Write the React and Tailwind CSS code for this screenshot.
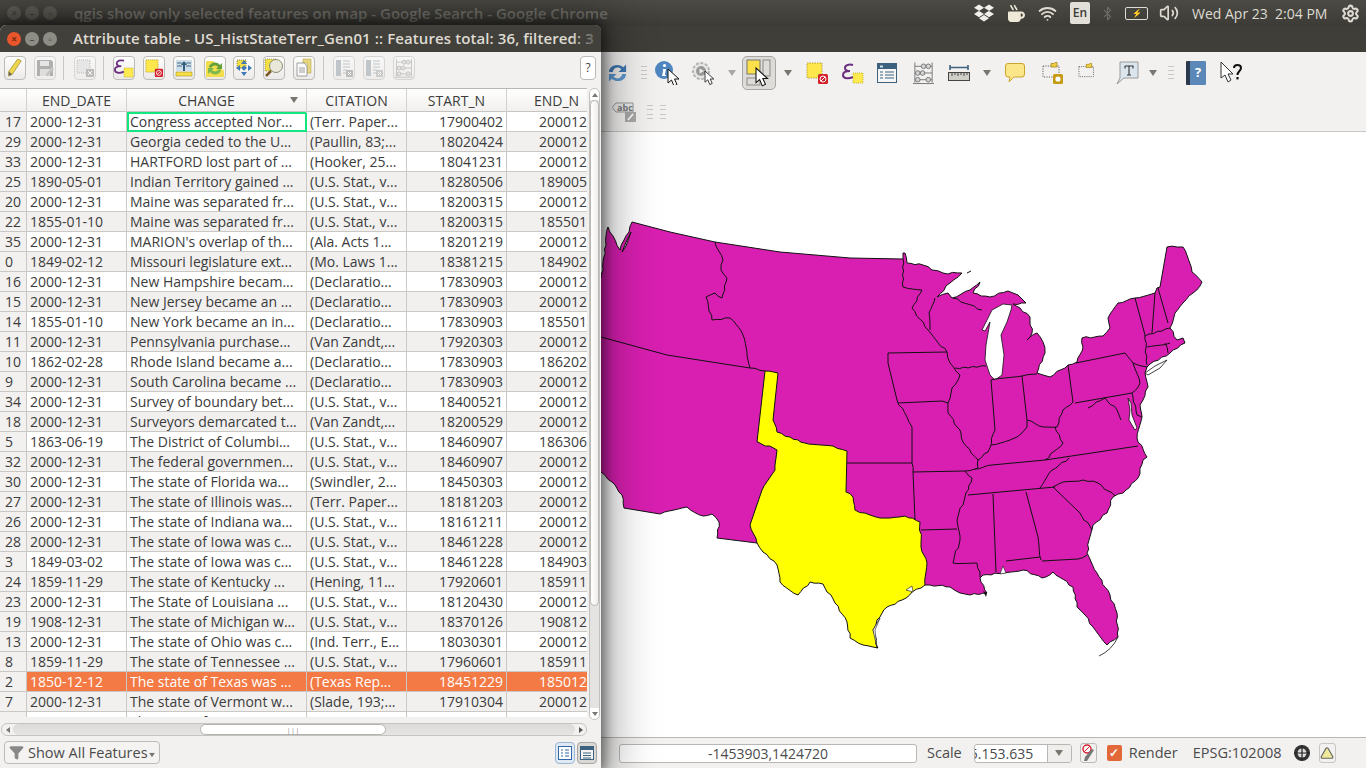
import { Wifi, Bluetooth, Volume2, Settings, Triangle, Funnel } from "lucide-react";
import { FaDropbox, FaMugHot } from "react-icons/fa";

const rows = [
  [17, "2000-12-31", "Congress accepted Nor...", "(Terr. Paper...", "17900402", "20001231"],
  [29, "2000-12-31", "Georgia ceded to the U...", "(Paullin, 83;...", "18020424", "20001231"],
  [33, "2000-12-31", "HARTFORD lost part of ...", "(Hooker, 25...", "18041231", "20001231"],
  [25, "1890-05-01", "Indian Territory gained ...", "(U.S. Stat., v...", "18280506", "18900501"],
  [20, "2000-12-31", "Maine was separated fr...", "(U.S. Stat., v...", "18200315", "20001231"],
  [22, "1855-01-10", "Maine was separated fr...", "(U.S. Stat., v...", "18200315", "18550110"],
  [35, "2000-12-31", "MARION's overlap of th...", "(Ala. Acts 1...", "18201219", "20001231"],
  [0, "1849-02-12", "Missouri legislature ext...", "(Mo. Laws 1...", "18381215", "18490212"],
  [16, "2000-12-31", "New Hampshire becam...", "(Declaratio...", "17830903", "20001231"],
  [15, "2000-12-31", "New Jersey became an ...", "(Declaratio...", "17830903", "20001231"],
  [14, "1855-01-10", "New York became an in...", "(Declaratio...", "17830903", "18550110"],
  [11, "2000-12-31", "Pennsylvania purchase...", "(Van Zandt,...", "17920303", "20001231"],
  [10, "1862-02-28", "Rhode Island became a...", "(Declaratio...", "17830903", "18620228"],
  [9, "2000-12-31", "South Carolina became ...", "(Declaratio...", "17830903", "20001231"],
  [34, "2000-12-31", "Survey of boundary bet...", "(U.S. Stat., v...", "18400521", "20001231"],
  [18, "2000-12-31", "Surveyors demarcated t...", "(Van Zandt,...", "18200529", "20001231"],
  [5, "1863-06-19", "The District of Columbi...", "(U.S. Stat., v...", "18460907", "18630619"],
  [32, "2000-12-31", "The federal governmen...", "(U.S. Stat., v...", "18460907", "20001231"],
  [30, "2000-12-31", "The state of Florida wa...", "(Swindler, 2...", "18450303", "20001231"],
  [27, "2000-12-31", "The state of Illinois was...", "(Terr. Paper...", "18181203", "20001231"],
  [26, "2000-12-31", "The state of Indiana wa...", "(U.S. Stat., v...", "18161211", "20001231"],
  [28, "2000-12-31", "The state of Iowa was c...", "(U.S. Stat., v...", "18461228", "20001231"],
  [3, "1849-03-02", "The state of Iowa was c...", "(U.S. Stat., v...", "18461228", "18490302"],
  [24, "1859-11-29", "The state of Kentucky ...", "(Hening, 11...", "17920601", "18591129"],
  [23, "2000-12-31", "The State of Louisiana ...", "(U.S. Stat., v...", "18120430", "20001231"],
  [19, "1908-12-31", "The state of Michigan w...", "(U.S. Stat., v...", "18370126", "19081231"],
  [13, "2000-12-31", "The state of Ohio was c...", "(Ind. Terr., E...", "18030301", "20001231"],
  [8, "1859-11-29", "The state of Tennessee ...", "(U.S. Stat., v...", "17960601", "18591129"],
  [2, "1850-12-12", "The state of Texas was ...", "(Texas Rep...", "18451229", "18501212"],
  [7, "2000-12-31", "The state of Vermont w...", "(Slade, 193;...", "17910304", "20001231"],
  [6, "2000-12-31", "The state of Virginia w...", "(U.S. Stat., v...", "17880625", "20001231"],
];

const purple =
  "M590,278 L601,278 L603,262 L606,245 L608,227 L613,236 L620,250 L624,240 L629,232 L632,222 L670,232 L715,242 L780,252 L850,258 L903,259 L903,253 L905,253 L907,263 L923,265 L932,270 L943,273 L962,273 L950,283 L937,297 L948,293 L952,298 L970,290 L980,282 L973,293 L990,297 L1008,291 L1018,295 L1026,303 L1013,304 L1020,308 L1030,317 L1032,333 L1027,340 L1030,337 L1037,333 L1043,342 L1045,353 L1037,373 L1043,375 L1050,377 L1068,365 L1077,362 L1083,347 L1082,338 L1103,336 L1110,328 L1108,318 L1118,303 L1135,298 L1155,293 L1157,288 L1160,287 L1167,247 L1177,247 L1183,247 L1192,272 L1202,282 L1193,293 L1183,303 L1175,313 L1170,328 L1177,340 L1183,338 L1185,343 L1170,353 L1150,364 L1147,367 L1145,373 L1148,387 L1143,400 L1140,405 L1142,417 L1137,438 L1147,457 L1143,460 L1138,478 L1123,493 L1113,497 L1107,513 L1093,525 L1087,553 L1097,573 L1110,595 L1117,613 L1118,637 L1107,645 L1093,627 L1085,615 L1077,607 L1073,587 L1053,572 L1042,578 L1023,570 L1003,573 L983,575 L980,578 L987,593 L970,595 L960,593 L950,587 L930,585 L925,585 L757,543 L717,538 L719,522 L712,514 L703,516 L687,507 L682,508 L660,514 L624,508 L622,495 L612,482 L601,472 L590,472 Z";

const texas =
  "M765,371 L778,373 L773,420 L777,432 L790,437 L805,443 L833,446 L847,451 L846,492 L853,497 L855,510 L870,515 L880,518 L890,518 L905,516 L920,522 L921,547 L927,563 L925,585 L912,592 L902,600 L887,607 L877,620 L873,630 L878,648 L863,645 L850,638 L847,622 L835,603 L823,584 L810,582 L798,595 L780,582 L777,565 L763,552 L757,543 L750,525 L762,490 L775,470 L777,450 L758,442 L757,442 Z";

const borders = [
  "M601,337 L667,355 L750,368 L765,371",
  "M715,242 L723,260 L721,270 L727,278 L722,298 L715,293 L706,297 L712,320 L730,318 L743,335 L747,352 L750,368",
  "M903,259 L903,287 L922,290 L912,308 L928,330 L947,352",
  "M888,353 L947,352",
  "M888,353 L888,363 L897,400 L907,417 L912,427 L912,463 L847,463",
  "M898,403 L942,401 L948,403",
  "M912,463 L913,472 L915,520",
  "M913,472 L965,471 L972,478 L965,497 L957,520 L960,540 L953,563 L977,563 L980,577",
  "M921,530 L957,529",
  "M947,352 L950,363 L960,375 L952,388 L948,403 L948,413 L960,430 L963,442 L978,460 L978,468 L975,469 L965,471",
  "M955,368 L986,366",
  "M991,380 L995,430 L988,452 L978,460",
  "M991,380 L1022,376 L1037,374",
  "M1022,376 L1027,420",
  "M991,445 L1010,440 L1017,437 L1027,427 L1027,420 L1043,427 L1057,427 L1063,410 L1073,402 L1068,365",
  "M975,469 L992,465 L1045,460 L1138,446",
  "M968,495 L1055,487",
  "M993,494 L996,572",
  "M1026,492 L1038,537 L1041,560",
  "M1006,561 L1040,557",
  "M1042,561 L1078,559 L1087,555",
  "M1053,487 L1080,513 L1092,530",
  "M1053,487 L1063,482 L1083,480 L1098,483 L1115,496",
  "M1040,488 L1052,470 L1069,458",
  "M1045,460 L1063,443 L1055,427",
  "M1076,363 L1125,353 L1133,363 L1140,383 L1132,393 L1075,403",
  "M1133,363 L1147,367",
  "M1088,408 L1105,398 L1117,410 L1121,420",
  "M1135,298 L1145,335 L1147,365",
  "M1145,336 L1170,328",
  "M1147,347 L1170,343",
  "M1155,293 L1152,333",
  "M1158,288 L1168,323",
  "M1165,343 L1168,353",
  "M935,298 L929,313 L930,330",
  "M982,310 L953,298",
  "M1132,393 L1137,415 L1142,417",
];

// coasts and rivers in the picture are jagged, so break up the short segments a bit
const roughen = (d) => {
  const pts = d.match(/-?\d+,-?\d+/g).map((p) => p.split(",").map(Number));
  const closed = d.trim().endsWith("Z");
  let out = `M${pts[0][0]},${pts[0][1]}`;
  for (let i = 1; i < pts.length; i++) {
    const [ax, ay] = pts[i - 1];
    const [bx, by] = pts[i];
    const len = Math.hypot(bx - ax, by - ay);
    if (len > 7 && len < 34) {
      const steps = Math.floor(len / 4);
      const seed = Math.abs(ax * 7 + ay * 13 + bx * 17 + by * 23);
      for (let s = 1; s < steps; s++) {
        const t = s / steps;
        const off = ((seed * (s + 3) * 37) % 17) / 8 - 1;
        out += ` L${(ax + (bx - ax) * t - ((by - ay) / len) * off).toFixed(1)},${(ay + (by - ay) * t + ((bx - ax) / len) * off).toFixed(1)}`;
      }
    }
    out += ` L${bx},${by}`;
  }
  return closed ? `${out} Z` : out;
};

const IconBtn = ({ children, className = "", off = false }) => (
  <div className={`flex h-[24px] w-[22px] shrink-0 items-center justify-center rounded-[4px] border border-[#bdbbb7] bg-linear-to-b from-white to-[#eceae8] ${off ? "opacity-50" : ""} ${className}`}>
    {children}
  </div>
);

const Sep = ({ className = "" }) => <div className={`h-[24px] w-px shrink-0 bg-[#c9c7c3] ${className}`} />;

const Grip = ({ className = "" }) => (
  <div className={`flex h-[14px] w-[6px] shrink-0 flex-col justify-between ${className}`}>
    <div className="h-px bg-[#c9c7c3]" />
    <div className="h-px bg-[#c9c7c3]" />
    <div className="h-px bg-[#c9c7c3]" />
    <div className="h-px bg-[#c9c7c3]" />
  </div>
);

const Drop = ({ className = "" }) => (
  <svg viewBox="0 0 8 6" className={`h-[6px] w-[8px] shrink-0 ${className}`}>
    <path d="M0 0H8L4 6Z" fill="#77766f" />
  </svg>
);

const PencilIcon = () => (
  <svg viewBox="0 0 20 22" className="h-[22px] w-[18px]">
    <path d="M13 1L17 3L7 18L3 20L3 15Z" fill="#edd54e" stroke="#a08c2a" strokeWidth=".8" />
    <path d="M3 15L7 18L3 20Z" fill="#6a6a5a" />
  </svg>
);

const SaveIcon = () => (
  <svg viewBox="0 0 20 20" className="h-[20px] w-[20px]">
    <path d="M2 2H16L18 4V18H2Z" fill="#6f6f6f" />
    <rect x="5" y="3" width="9" height="5" fill="#ddd" />
    <rect x="5" y="11" width="10" height="7" fill="#ccc" />
    <path d="M17 9L19 11L13 18H11V16Z" fill="#999" />
  </svg>
);

const DelSel = () => (
  <svg viewBox="0 0 20 20" className="h-[20px] w-[20px]">
    <rect x="2" y="2" width="13" height="13" fill="#ddd" stroke="#888" strokeDasharray="1 1" />
    <rect x="11" y="11" width="8" height="8" fill="#888" />
    <path d="M13 13L17 17M17 13L13 17" stroke="#fff" />
  </svg>
);

const EpsIcon = ({ className = "h-[22px] w-[20px]" }) => (
  <svg viewBox="0 0 22 22" className={className}>
    <path d="M11 3C7 2 3 3 3 6C3 8 5 9 8 9C4 9 1 10 1 13C1 17 7 17 11 15" fill="none" stroke="#6b2f80" strokeWidth="2" />
    <rect x="11" y="11" width="10" height="10" fill="#fdea4e" stroke="#b9a52a" strokeWidth=".8" strokeDasharray="1 1" />
  </svg>
);

const DeselIcon = ({ className = "h-[20px] w-[18px]" }) => (
  <svg viewBox="0 0 22 22" className={className}>
    <rect x="1" y="1" width="15" height="15" fill="#fde74c" stroke="#a8932b" strokeWidth=".8" strokeDasharray="1.5 1" />
    <rect x="12" y="12" width="10" height="10" rx="1.5" fill="#d6212c" />
    <circle cx="17" cy="17" r="3" fill="none" stroke="#fff" />
    <path d="M15 19L19 15" stroke="#fff" />
  </svg>
);

const MoveTopIcon = () => (
  <svg viewBox="0 0 20 20" className="h-[20px] w-[20px]">
    <rect x="2" y="2" width="16" height="11" fill="#cfdfe9" />
    <path d="M3 5H8M3 8H8M12 5H17M12 8H17" stroke="#456c87" />
    <path d="M10 3L13 7H11V13H9V7H7Z" fill="#2f5d7c" />
    <rect x="2" y="14" width="16" height="4" fill="#f7de45" stroke="#a8932b" strokeWidth=".6" />
  </svg>
);

const InvertIcon = () => (
  <svg viewBox="0 0 20 20" className="h-[20px] w-[20px]">
    <path d="M1 3L8 3L19 13V19H1Z" fill="#f2dd4c" />
    <path d="M4 9C5 4 12 3 15 7L17 5V11H11L13 9C11 7 8 7 6 10Z" fill="#63a13d" />
    <path d="M16 12C15 17 8 18 5 14L3 16V10H9L7 12C9 14 12 14 14 11Z" fill="#7cb84e" />
  </svg>
);

const PanSelIcon = () => (
  <svg viewBox="0 0 20 20" className="h-[20px] w-[20px]">
    <path d="M3 2H12V10H3Z" fill="#f4df44" stroke="#333" strokeWidth=".6" strokeDasharray="1 1" />
    <path d="M10 2L13 6H7ZM10 18L7 14H13ZM2 10L6 7V13ZM18 10L14 13V7Z" fill="#3f78b5" />
    <rect x="8" y="8" width="4" height="4" fill="#3f78b5" transform="rotate(45 10 10)" />
  </svg>
);

const ZoomSelIcon = () => (
  <svg viewBox="0 0 20 20" className="h-[20px] w-[20px]">
    <rect x="1" y="1" width="11" height="12" fill="#f4df44" stroke="#555" strokeWidth=".6" strokeDasharray="1 1" />
    <circle cx="12" cy="8" r="6.5" fill="#e9e8d9" stroke="#8a8a72" />
    <path d="M7 13L2 18" stroke="#7c5a26" strokeWidth="2.5" />
  </svg>
);

const CopyIcon = () => (
  <svg viewBox="0 0 20 20" className="h-[20px] w-[20px]">
    <path d="M9 1H17V15H13V5H9Z" fill="#e7d680" stroke="#b9a64e" strokeWidth=".6" />
    <path d="M3 5H10L13 8V18H3Z" fill="#fafafa" stroke="#8a8a8a" strokeWidth=".8" />
    <path d="M5 10H11M5 12H11M5 14H11" stroke="#888" strokeWidth=".8" />
  </svg>
);

const ColsIcon = ({ star = false }) => (
  <svg viewBox="0 0 20 20" className="h-[20px] w-[20px]">
    <rect x="2" y="2" width="5" height="16" fill="#8e9ba4" />
    <path d="M9 3H16M9 6H16M9 9H16M9 12H13M9 15H12" stroke="#8e9ba4" />
    <rect x="12" y="12" width="7" height="7" fill={star ? "#a9a9a9" : "#888"} />
    <path d="M14 14L17 17M17 14L14 17" stroke="#fff" />
  </svg>
);

const AbacusIcon = ({ className = "h-[20px] w-[20px]", color = "#8f8f8f" }) => (
  <svg viewBox="0 0 24 24" className={className}>
    <path d="M3 1V22M21 1V22M1 23H23M3 5H21M3 12H21M3 19H21" stroke={color} fill="none" />
    <circle cx="12" cy="5" r="2.4" fill="#d4d4d4" stroke={color} />
    <circle cx="17" cy="5" r="2.4" fill="#d4d4d4" stroke={color} />
    <circle cx="6" cy="12" r="2.4" fill="#d4d4d4" stroke={color} />
    <circle cx="11" cy="12" r="2.4" fill="#d4d4d4" stroke={color} />
    <circle cx="6" cy="19" r="2.4" fill="#d4d4d4" stroke={color} />
    <circle cx="17" cy="19" r="2.4" fill="#d4d4d4" stroke={color} />
  </svg>
);

const Cursor = ({ x = 0, y = 0, s = 1 }) => (
  <path transform={`translate(${x} ${y}) scale(${s})`} d="M0 0L0 14L3.5 11L6 17L9 15.5L6.5 10L11 10Z" fill="#fff" stroke="#111" strokeWidth="1" />
);

const RefreshIcon = () => (
  <svg viewBox="0 0 22 22" className="h-[22px] w-[21px] shrink-0">
    <path d="M2 10C2 3 12 0 17 5L20 2V10H12L15 7C12 4 7 5 6 10Z" fill="#3f79b4" />
    <path d="M20 12C20 19 10 22 5 17L2 20V12H10L7 15C10 18 15 17 16 12Z" fill="#5d9ad3" />
  </svg>
);

const InfoIcon = () => (
  <svg viewBox="0 0 24 24" className="h-[24px] w-[24px] shrink-0">
    <circle cx="9" cy="9" r="9" fill="#4f86c0" />
    <circle cx="9.5" cy="4.5" r="1.6" fill="#fff" />
    <path d="M8 8H11L9.8 14H11V15H7L8.2 9H7.6Z" fill="#fff" />
    <Cursor x={13} y={8} />
  </svg>
);

const GearIcon = () => (
  <svg viewBox="0 0 24 24" className="h-[24px] w-[24px] shrink-0">
    <circle cx="9" cy="10" r="8" fill="#e8e8e6" stroke="#b3b3b0" strokeWidth="2" strokeDasharray="3 1.6" />
    <circle cx="9" cy="10" r="5" fill="#9a9a98" />
    <path d="M7.5 7.5L12 10L7.5 12.5Z" fill="#eee" />
    <Cursor x={13} y={10} s={0.8} />
  </svg>
);

const SelectIcon = () => (
  <div className="ml-[6px] flex h-[34px] w-[34px] shrink-0 items-center justify-center rounded-[5px] border border-[#a9a7a3] bg-[#dedcd9]">
    <svg viewBox="0 0 26 28" className="h-[28px] w-[26px]">
      <rect x="1" y="1" width="13" height="14" fill="#fce14a" stroke="#77776f" />
      <rect x="17" y="1" width="7" height="16" fill="#dedcd9" stroke="#8a8a86" />
      <rect x="1" y="19" width="13" height="7" fill="#dedcd9" stroke="#8a8a86" />
      <Cursor x={10} y={9} s={1.05} />
    </svg>
  </div>
);

const TableIcon = () => (
  <svg viewBox="0 0 20 20" className="ml-[13px] h-[20px] w-[20px] shrink-0">
    <rect x=".5" y=".5" width="19" height="19" fill="#f6f6f6" stroke="#3d627f" />
    <rect x="1" y="1" width="18" height="5" fill="#3d627f" />
    <rect x="3" y="2.5" width="3" height="2" fill="#cfe0ee" />
    <path d="M3 9H6M8 9H17M3 12H6M8 12H17M3 15H6M8 15H17" stroke="#3d627f" />
  </svg>
);

const RulerIcon = () => (
  <svg viewBox="0 0 22 16" className="ml-[13px] h-[16px] w-[22px] shrink-0">
    <path d="M2 0V5M20 0V5M2 2.5H20" stroke="#3d627f" strokeWidth="1.6" />
    <rect x=".5" y="7.5" width="21" height="8" fill="#cfcfc7" stroke="#444" />
    <path d="M4 8V11M7 8V10M10 8V11M13 8V10M16 8V11M19 8V10" stroke="#444" />
  </svg>
);

const BubbleIcon = () => (
  <svg viewBox="0 0 20 20" className="ml-[14px] h-[20px] w-[20px] shrink-0">
    <path d="M3 .5H17Q19.5 .5 19.5 3V11Q19.5 14 17 14H9L4 19L5 14H3Q.5 14 .5 11V3Q.5 .5 3 .5Z" fill="#fbe68a" stroke="#c9a52a" />
  </svg>
);

const AnnotIcon = ({ gear = false, className = "" }) => (
  <svg viewBox="0 0 22 22" className={`h-[22px] shrink-0 ${gear ? "w-[22px]" : "w-[20px]"} ${className}`}>
    <rect x="1" y="4" width="16" height="11" fill="none" stroke="#666" strokeDasharray="1.2 1.2" />
    <path d="M9 5V1.5H12L13 .5H15V5Z" fill="#f0cd3f" stroke="#a5881f" strokeWidth=".8" />
    {gear && <rect x="11" y="12" width="10" height="10" rx="1.5" fill="#c59b13" />}
    {gear && <circle cx="16" cy="17" r="2.6" fill="#fff" />}
  </svg>
);

const TextIcon = () => (
  <svg viewBox="0 0 24 24" className="ml-[17px] h-[24px] w-[24px] shrink-0">
    <path d="M5 1H23V17H9L2 23L5 17Z" fill="#dae5ee" stroke="#9a9a9a" />
    <path d="M10 5H18V7.5M14 5V14M12 14H16M10 5V7.5" fill="none" stroke="#333" strokeWidth="1.1" />
  </svg>
);

const BookIcon = () => (
  <div className="ml-[12px] flex h-[24px] w-[20px] shrink-0 items-center justify-center rounded-[1px] border-l-[4px] border-l-[#2a3a4c] bg-[#5b88b8] text-[13px] leading-none font-bold text-white">
    ?
  </div>
);

const WhatsThis = () => (
  <svg viewBox="0 0 24 22" className="ml-[14px] h-[22px] w-[24px] shrink-0">
    <path d="M1 0L1 16L5 13L8 20L11 18L8 12L13 12Z" fill="#fff" stroke="#333" />
    <path d="M14 6C14 2 21 2 21 6C21 9 17.5 9 17.5 13" fill="none" stroke="#111" strokeWidth="2" />
    <rect x="16.4" y="15" width="2.2" height="2.4" fill="#111" />
  </svg>
);

const AbcIcon = () => (
  <div className="relative ml-[5px] h-[20px] w-[24px] shrink-0">
    <svg viewBox="0 0 24 20" className="h-[20px] w-[24px]">
      <path d="M4 1H21V10H4L0 5.5Z" fill="#ececec" stroke="#9a9a9a" />
      <rect x="13" y="10" width="11" height="10" fill="#a9a9a9" />
      <path d="M16 18L21 12" stroke="#fff" strokeWidth="1.6" />
    </svg>
    <span className="absolute top-[-1px] left-[5px] text-[9px] font-bold text-[#777]">abc</span>
  </div>
);

const Dot = ({ className, sign }) => (
  <div className={`flex h-[14px] w-[14px] items-center justify-center rounded-full text-[10px] leading-none ${className}`}>{sign}</div>
);

const TableGrid = () => (
  <div className="relative h-[629px] w-[587px] overflow-hidden border-t border-[#b9b7b3] bg-white text-[#3c3c3c]">
    <div className="grid h-[23px] w-[607px] grid-cols-[27px_100px_180px_100px_100px_100px] border-b border-[#c6c5c1] bg-linear-to-b from-white to-[#f1f0ee] text-center">
      <div className="border-r border-[#d2d1cd]" />
      <div className="border-r border-[#d2d1cd] leading-[24px]">END_DATE</div>
      <div className="relative border-r border-[#d2d1cd] pr-[20px] leading-[24px]">
        CHANGE
        <Drop className="absolute top-[8px] right-[8px]" />
      </div>
      <div className="border-r border-[#d2d1cd] leading-[24px]">CITATION</div>
      <div className="border-r border-[#d2d1cd] leading-[24px]">START_N</div>
      <div className="border-r border-[#d2d1cd] leading-[24px]">END_N</div>
    </div>
    {rows.map((r, i) => {
      const selected = r[0] === 2;
      const bg = selected ? "bg-[#f47a45] text-white" : i % 2 ? "bg-[#f1f0ef]" : "bg-white";
      return (
        <div key={r[0]} className={`grid h-[20px] w-[607px] grid-cols-[27px_100px_180px_100px_100px_100px] leading-[19px] whitespace-nowrap ${bg}`}>
          <div className="border-r border-b border-[#c9c8c4] bg-[#f2f1f0] pl-[5px] text-[#3c3c3c]">{r[0]}</div>
          <div className="overflow-hidden border-r border-b border-[#c9c8c4] pl-[3px]">{r[1]}</div>
          <div className={`overflow-hidden border-r border-b border-[#c9c8c4] pl-[3px] ${i === 0 ? "outline-2 -outline-offset-2 outline-[#14e67f]" : ""}`}>{r[2]}</div>
          <div className="overflow-hidden border-r border-b border-[#c9c8c4] pl-[3px]">{r[3]}</div>
          <div className="overflow-hidden border-r border-b border-[#c9c8c4] pr-[3px] text-right">{r[4]}</div>
          <div className="overflow-hidden border-r border-b border-[#c9c8c4] pr-[3px] text-right">{r[5]}</div>
        </div>
      );
    })}
  </div>
);

const VScroll = () => (
  <div className="ml-[2px] flex h-[632px] w-[11px] shrink-0 flex-col rounded-[6px] border border-[#c2c0bc] bg-[#e4e3e1]">
    <div className="flex h-[11px] items-center justify-center rounded-t-[6px] bg-white">
      <div className="h-0 w-0 border-x-[3px] border-b-[4px] border-x-transparent border-b-[#777]" />
    </div>
    <div className="h-[506px] rounded-[5px] border border-[#bbb9b5] bg-linear-to-r from-white to-[#eeedeb]" />
    <div className="flex-1" />
    <div className="flex h-[11px] items-center justify-center rounded-b-[6px] bg-white">
      <div className="h-0 w-0 border-x-[3px] border-t-[4px] border-x-transparent border-t-[#777]" />
    </div>
  </div>
);

const HScroll = () => (
  <div className="mt-[3px] ml-[1px] flex h-[13px] w-[586px] items-center rounded-[6px] border border-[#c6c4c0] bg-[#f2f1f0]">
    <div className="flex w-[11px] justify-center">
      <div className="h-0 w-0 border-y-[3px] border-r-[4px] border-y-transparent border-r-[#777]" />
    </div>
    <div className="flex h-full flex-1 rounded-[6px] bg-linear-to-b from-[#dbdad8] to-[#e6e5e3] pl-[187px]">
      <div className="flex h-full w-[186px] items-center justify-center rounded-[6px] border border-[#b5b3af] bg-white text-[8px] leading-none text-[#999]">|||</div>
    </div>
    <div className="flex w-[11px] justify-center">
      <div className="h-0 w-0 border-y-[3px] border-l-[4px] border-y-transparent border-l-[#555]" />
    </div>
  </div>
);

const AttributeWindow = () => (
  <div className="absolute top-[25px] left-0 flex h-[743px] w-[601px] flex-col overflow-visible rounded-t-[6px] bg-[#f2f1f0] text-[14px] shadow-[0_0_12px_4px_rgba(0,0,0,0.45),0_0_45px_12px_rgba(0,0,0,0.35)]">
    <div className="relative flex h-[27px] shrink-0 items-center overflow-hidden rounded-t-[6px] bg-[#41403b] pl-[7px]">
      <Dot className="bg-[#e9562c] font-bold text-[#7a2a10]" sign="×" />
      <Dot className="ml-[4px] bg-[#8d8c85] text-[#44433e]" sign="–" />
      <Dot className="ml-[4px] bg-[#8d8c85] text-[#44433e]" sign="▫" />
      <div className="ml-[16px] w-[528px] overflow-hidden text-[15px] font-semibold tracking-[0.1px] whitespace-nowrap text-[#dfdbd2]">
        Attribute table - US_HistStateTerr_Gen01 :: Features total: 36, filtered: 3
      </div>
      <div className="absolute top-0 right-0 h-full w-[30px] bg-linear-to-r from-transparent to-[#41403b]" />
    </div>

    <div className="flex h-[36px] shrink-0 items-center pb-[4px] pl-[4px]">
      <IconBtn><PencilIcon /></IconBtn>
      <IconBtn off className="ml-[8px]"><SaveIcon /></IconBtn>
      <Sep className="ml-[7px]" />
      <IconBtn off className="ml-[10px]"><DelSel /></IconBtn>
      <Sep className="ml-[7px]" />
      <IconBtn className="ml-[9px]"><EpsIcon /></IconBtn>
      <IconBtn className="ml-[8px]"><DeselIcon /></IconBtn>
      <IconBtn className="ml-[8px]"><MoveTopIcon /></IconBtn>
      <IconBtn className="ml-[9px]"><InvertIcon /></IconBtn>
      <IconBtn className="ml-[7px]"><PanSelIcon /></IconBtn>
      <IconBtn className="ml-[8px]"><ZoomSelIcon /></IconBtn>
      <IconBtn className="ml-[8px]"><CopyIcon /></IconBtn>
      <Sep className="ml-[8px]" />
      <IconBtn off className="ml-[9px]"><ColsIcon /></IconBtn>
      <IconBtn off className="ml-[8px]"><ColsIcon star /></IconBtn>
      <IconBtn off className="ml-[8px]"><AbacusIcon /></IconBtn>
      <div className="mr-[5px] ml-auto flex h-[24px] w-[16px] items-center justify-center rounded-[4px] border border-[#bdbbb7] bg-white text-[12px] text-[#444]">?</div>
    </div>

    <div className="flex shrink-0">
      <TableGrid />
      <VScroll />
    </div>
    <HScroll />

    <div className="mt-[5px] flex items-center pl-[4px]">
      <div className="flex h-[23px] w-[156px] items-center rounded-[4px] border border-[#bdbbb7] bg-[#f4f3f2] pl-[4px] text-[14.5px] text-[#4b4b4b]">
        <Funnel size={15} fill="#888" stroke="#888" />
        <span className="ml-[4px]">Show All Features</span>
        <Drop className="mt-[4px] scale-75" />
      </div>
      <div className="ml-auto flex h-[22px] w-[20px] items-center justify-center rounded-[4px] border border-[#9db7d3] bg-[#dfe9f3]">
        <svg viewBox="0 0 14 14" className="h-[14px] w-[14px]">
          <rect x=".5" y=".5" width="13" height="13" fill="#fff" stroke="#2f68ad" />
          <path d="M3 4H5M7 4H11M3 7H5M7 7H11M3 10H5M7 10H11" stroke="#2f68ad" />
        </svg>
      </div>
      <div className="mr-[4px] ml-[2px] flex h-[22px] w-[20px] items-center justify-center rounded-[4px] border border-[#a9a7a3] bg-[#d9d8d5]">
        <svg viewBox="0 0 14 14" className="h-[14px] w-[14px]">
          <rect x=".5" y=".5" width="13" height="13" fill="#f4f4f4" stroke="#3d627f" />
          <rect x="1" y="1" width="12" height="3" fill="#3d627f" />
          <path d="M3 7H11M3 9.5H11M3 12H11" stroke="#3d627f" />
        </svg>
      </div>
    </div>
  </div>
);

export default function App() {
  return (
    <div className="relative flex h-[768px] w-[1366px] flex-col overflow-hidden bg-[#f2f1f0] font-['Open_Sans',sans-serif] text-[14px] text-[#3c3c3c]">
      {/* ubuntu panel */}
      <div className="flex h-[26px] shrink-0 items-center bg-linear-to-b from-[#4b4a44] to-[#3c3b37] pl-[7px] text-[#dfdbd2]">
        <Dot className="bg-[#5d5c55] text-[#3c3b37]" sign="×" />
        <Dot className="ml-[4px] bg-[#5d5c55] text-[#3c3b37]" sign="–" />
        <Dot className="ml-[4px] bg-[#5d5c55] text-[#3c3b37]" sign="▫" />
        <div className="ml-[17px] w-[540px] text-[15px] font-semibold whitespace-nowrap text-[#77756e]">
          qgis show only selected features on map - Google Search - Google Chrome
        </div>
        <FaDropbox size={20} className="ml-[360px] text-[#f2f0ea]" />
        <FaMugHot size={17} className="ml-[14px] text-[#efe9d8]" />
        <Wifi size={19} strokeWidth={2.4} className="ml-[13px]" />
        <div className="ml-[13px] flex h-[22px] w-[20px] items-center justify-center rounded-[2px] bg-[#e3e0d9] text-[12px] font-semibold text-[#3c3b37]">En</div>
        <Bluetooth size={15} className="ml-[10px] text-[#6c6b65]" />
        <div className="ml-[10px] flex h-[13px] w-[23px] items-center justify-center rounded-[2px] border border-[#dfdbd2] text-[8px] leading-none">⚡</div>
        <Volume2 size={20} className="ml-[11px]" />
        <div className="ml-[13px] w-[139px] text-[14px] whitespace-nowrap">Wed Apr 23&nbsp; 2:04 PM</div>
        <Settings size={19} strokeWidth={2.6} className="ml-[10px]" />
      </div>

      {/* qgis title bar */}
      <div className="h-[26px] shrink-0 bg-[#3f3e39]" />

      {/* qgis toolbars */}
      <div className="h-[80px] shrink-0 border-b border-[#c9c7c3]">
        <div className="flex h-[41px] items-center pl-[607px]">
          <RefreshIcon />
          <Grip className="ml-[13px]" />
          <div className="ml-[8px]"><InfoIcon /></div>
          <div className="ml-[13px]"><GearIcon /></div>
          <Drop className="ml-[12px] opacity-60" />
          <SelectIcon />
          <Drop className="ml-[8px]" />
          <div className="ml-[14px]"><DeselIcon className="h-[22px] w-[22px]" /></div>
          <div className="ml-[14px]"><EpsIcon className="h-[22px] w-[22px]" /></div>
          <TableIcon />
          <div className="ml-[15px]"><AbacusIcon className="h-[24px] w-[23px]" color="#777" /></div>
          <RulerIcon />
          <Drop className="ml-[13px]" />
          <BubbleIcon />
          <AnnotIcon gear className="ml-[17px]" />
          <AnnotIcon className="ml-[14px]" />
          <TextIcon />
          <Drop className="ml-[10px]" />
          <Grip className="ml-[11px]" />
          <BookIcon />
          <WhatsThis />
        </div>
        <div className="flex h-[38px] items-center pl-[607px]">
          <AbcIcon />
          <Grip className="ml-[11px]" />
          <Grip className="ml-[7px]" />
        </div>
      </div>

      {/* map canvas */}
      <div className="flex-1 border-b border-[#b9b7b3] bg-white pl-[601px]">
        <svg viewBox="601 132 765 605" className="h-[605px] w-[765px]">
          <path d={roughen(purple)} fill="#d91fb1" stroke="#111" strokeWidth="1" strokeLinejoin="round" />
          <path d="M992,310 L982,330 L985,331 L990,322 L986,345 L985,360 L990,375 L995,380 L1002,375 L1004,355 L1001,335 L1007,322 L1011,310 L1012,305 L1003,304 Z" fill="#fff" stroke="#111" strokeWidth=".8" />
          <path d="M1145,373 L1155,366 L1167,360 L1160,368 L1148,375 Z" fill="#fff" stroke="#111" strokeWidth=".8" />
          <path d="M1128,398 L1130,410 L1129,420 L1135,430 L1137,428 L1132,415 L1131,403 Z" fill="#fff" stroke="#111" strokeWidth=".8" />
          <path d="M622,252 L627,240 L631,232 L626,246 Z M967,273 L971,271" fill="#fff" stroke="#111" strokeWidth="1" />
          <path d="M1000,574 L1003,566 L1006,573 Z" fill="#fff" stroke="#111" strokeWidth=".6" />
          <path d="M987,593 L983,591 L986,597 Z" fill="#111" />
          <path d="M1118,637 Q1112,650 1099,656" fill="none" stroke="#111" strokeWidth=".8" />
          <path d={roughen(texas)} fill="#ffff00" stroke="#111" strokeWidth="1" strokeLinejoin="round" />
          <path d="M873,630 L877,648 L875,630 L880,618 Z M906,590 L912,586 L913,592 Z" fill="#fff" stroke="#111" strokeWidth=".6" />
          <path d={borders.map(roughen).join(" ")} fill="none" stroke="#111" strokeWidth="1" strokeLinejoin="round" />
        </svg>
      </div>

      {/* status bar */}
      <div className="flex h-[30px] shrink-0 items-center pl-[619px] text-[14.5px] text-[#4b4b4b]">
        <div className="flex h-[19px] w-[298px] items-center justify-center rounded-[3px] border border-[#b9b7b3] bg-white text-[14px]">-1453903,1424720</div>
        <span className="ml-[10px]">Scale</span>
        <div className="ml-[12px] flex h-[19px] w-[98px] items-center overflow-hidden rounded-[3px] border border-[#b9b7b3] bg-white">
          <div className="w-[72px] overflow-hidden text-[14px] whitespace-nowrap">
            <span className="-ml-[5px] inline-block">5.153.635</span>
          </div>
          <div className="flex h-full flex-1 items-center justify-center border-l border-[#b9b7b3] bg-[#efeeec]"><Drop /></div>
        </div>
        <div className="ml-[8px] flex h-[20px] w-[17px] items-center justify-center rounded-[3px] border border-[#bdbbb7]">
          <svg viewBox="0 0 14 18" className="h-[18px] w-[14px]">
            <circle cx="6" cy="5" r="4" fill="#fff" stroke="#d6212c" strokeWidth="1.4" />
            <path d="M3 8L9 2" stroke="#d6212c" />
            <path d="M13 6L6 17H3L4 13L11 5Z" fill="#777" />
          </svg>
        </div>
        <div className="ml-[10px] flex h-[16px] w-[15px] items-center justify-center rounded-[2px] bg-[#e2683a] text-[12px] leading-none font-bold text-[#fff]">✓</div>
        <span className="ml-[7px]">Render</span>
        <span className="ml-[15px]">EPSG:102008</span>
        <svg viewBox="0 0 16 16" className="ml-[12px] h-[16px] w-[16px]">
          <circle cx="8" cy="8" r="8" fill="#333" />
          <circle cx="8" cy="8" r="4.5" fill="#ddd" />
          <path d="M8 0V16M0 8H16" stroke="#222" strokeWidth="1.2" />
        </svg>
        <div className="ml-[9px] flex h-[20px] w-[17px] items-center justify-center rounded-[3px] border border-[#c9c7c3]">
          <Triangle size={14} fill="#f0e89a" stroke="#666" />
        </div>
      </div>

      <AttributeWindow />
    </div>
  );
}
